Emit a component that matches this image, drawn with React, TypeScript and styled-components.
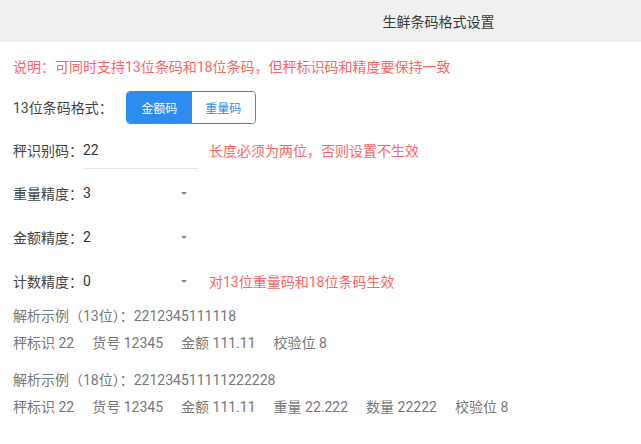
import React from "react";
import styled, { createGlobalStyle } from "styled-components";

const GlobalStyle = createGlobalStyle`
  html, body { margin: 0; padding: 0; background: #fff; }
  body {
    font-family: Roboto, "Noto Sans CJK SC", sans-serif;
    font-size: 14px;
    color: #333;
  }
`;

const Page = styled.div`
  width: 641px;
  height: 444px;
  overflow: hidden;
  background: #fff;
`;

const Header = styled.header`
  height: 42px;
  background: #f0f0f0;
  display: flex;
  align-items: center;
  justify-content: center;
  padding-left: 236px;
  box-sizing: border-box;
`;

const Title = styled.h1`
  margin: 0;
  font-size: 14px;
  font-weight: 400;
  color: #3a3a3a;
`;

const Content = styled.main`
  padding: 0 13px;
`;

const Note = styled.p`
  margin: 0;
  padding-top: 15px;
  height: 44px;
  box-sizing: border-box;
  line-height: 20px;
  color: #f66;
  font-size: 14px;
`;

const Row = styled.div<{ $h: number }>`
  height: ${(p) => p.$h}px;
  display: flex;
  align-items: center;
`;

const Label = styled.span`
  color: #444;
  white-space: nowrap;
`;

const Segment = styled.div`
  margin-left: 13px;
  display: flex;
  height: 33px;
  border: 1px solid #2d8cf0;
  border-radius: 4px;
  overflow: hidden;
  box-sizing: border-box;
`;

const SegButton = styled.button<{ $active?: boolean }>`
  width: ${(p) => (p.$active ? 65 : 63)}px;
  border: none;
  margin: 0;
  padding: 0;
  font-family: inherit;
  font-size: 12px;
  background: ${(p) => (p.$active ? "#2d8cf0" : "#fff")};
  color: ${(p) => (p.$active ? "#fff" : "#2d8cf0")};
  cursor: pointer;
`;

const Field = styled.div`
  position: relative;
  width: 115px;
  height: 38px;
  display: flex;
  align-items: center;
  box-sizing: border-box;
`;

const InputField = styled(Field)`
  border-bottom: 1px solid #e6e6e6;
  margin-top: 1px;
`;

const Value = styled.span`
  color: #333;
`;

const Arrow = styled.span`
  position: absolute;
  right: 11px;
  top: 50%;
  margin-top: -1px;
  width: 0;
  height: 0;
  border-left: 3px solid transparent;
  border-right: 3px solid transparent;
  border-top: 3px solid #888;
`;

const Hint = styled.span`
  margin-left: 11px;
  color: #f66;
  white-space: nowrap;
`;

const Examples = styled.section`
  display: flex;
  flex-direction: column;
  gap: 10px;
`;

const ExampleGroup = styled.div`
  color: #777;
  line-height: 27px;
`;

const ItemLine = styled.div`
  display: flex;
  gap: 18px;
`;

const App: React.FC = () => {
  const ex13 = ["秤标识 22", "货号 12345", "金额 111.11", "校验位 8"];
  const ex18 = [
    "秤标识 22",
    "货号 12345",
    "金额 111.11",
    "重量 22.222",
    "数量 22222",
    "校验位 8",
  ];
  return (
    <Page>
      <GlobalStyle />
      <Header>
        <Title>生鲜条码格式设置</Title>
      </Header>
      <Content>
        <Note>说明：可同时支持13位条码和18位条码，但秤标识码和精度要保持一致</Note>
        <Row $h={42}>
          <Label>13位条码格式：</Label>
          <Segment>
            <SegButton $active>金额码</SegButton>
            <SegButton>重量码</SegButton>
          </Segment>
        </Row>
        <Row $h={43}>
          <Label>秤识别码：</Label>
          <InputField>
            <Value>22</Value>
          </InputField>
          <Hint>长度必须为两位，否则设置不生效</Hint>
        </Row>
        <Row $h={44}>
          <Label>重量精度：</Label>
          <Field>
            <Value>3</Value>
            <Arrow />
          </Field>
        </Row>
        <Row $h={44}>
          <Label>金额精度：</Label>
          <Field>
            <Value>2</Value>
            <Arrow />
          </Field>
        </Row>
        <Row $h={44}>
          <Label>计数精度：</Label>
          <Field>
            <Value>0</Value>
            <Arrow />
          </Field>
          <Hint>对13位重量码和18位条码生效</Hint>
        </Row>
        <Examples>
          <ExampleGroup>
            <div>解析示例（13位）：2212345111118</div>
            <ItemLine>
              {ex13.map((t) => (
                <span key={t}>{t}</span>
              ))}
            </ItemLine>
          </ExampleGroup>
          <ExampleGroup>
            <div>解析示例（18位）：221234511111222228</div>
            <ItemLine>
              {ex18.map((t) => (
                <span key={t}>{t}</span>
              ))}
            </ItemLine>
          </ExampleGroup>
        </Examples>
      </Content>
    </Page>
  );
};

export default App;
